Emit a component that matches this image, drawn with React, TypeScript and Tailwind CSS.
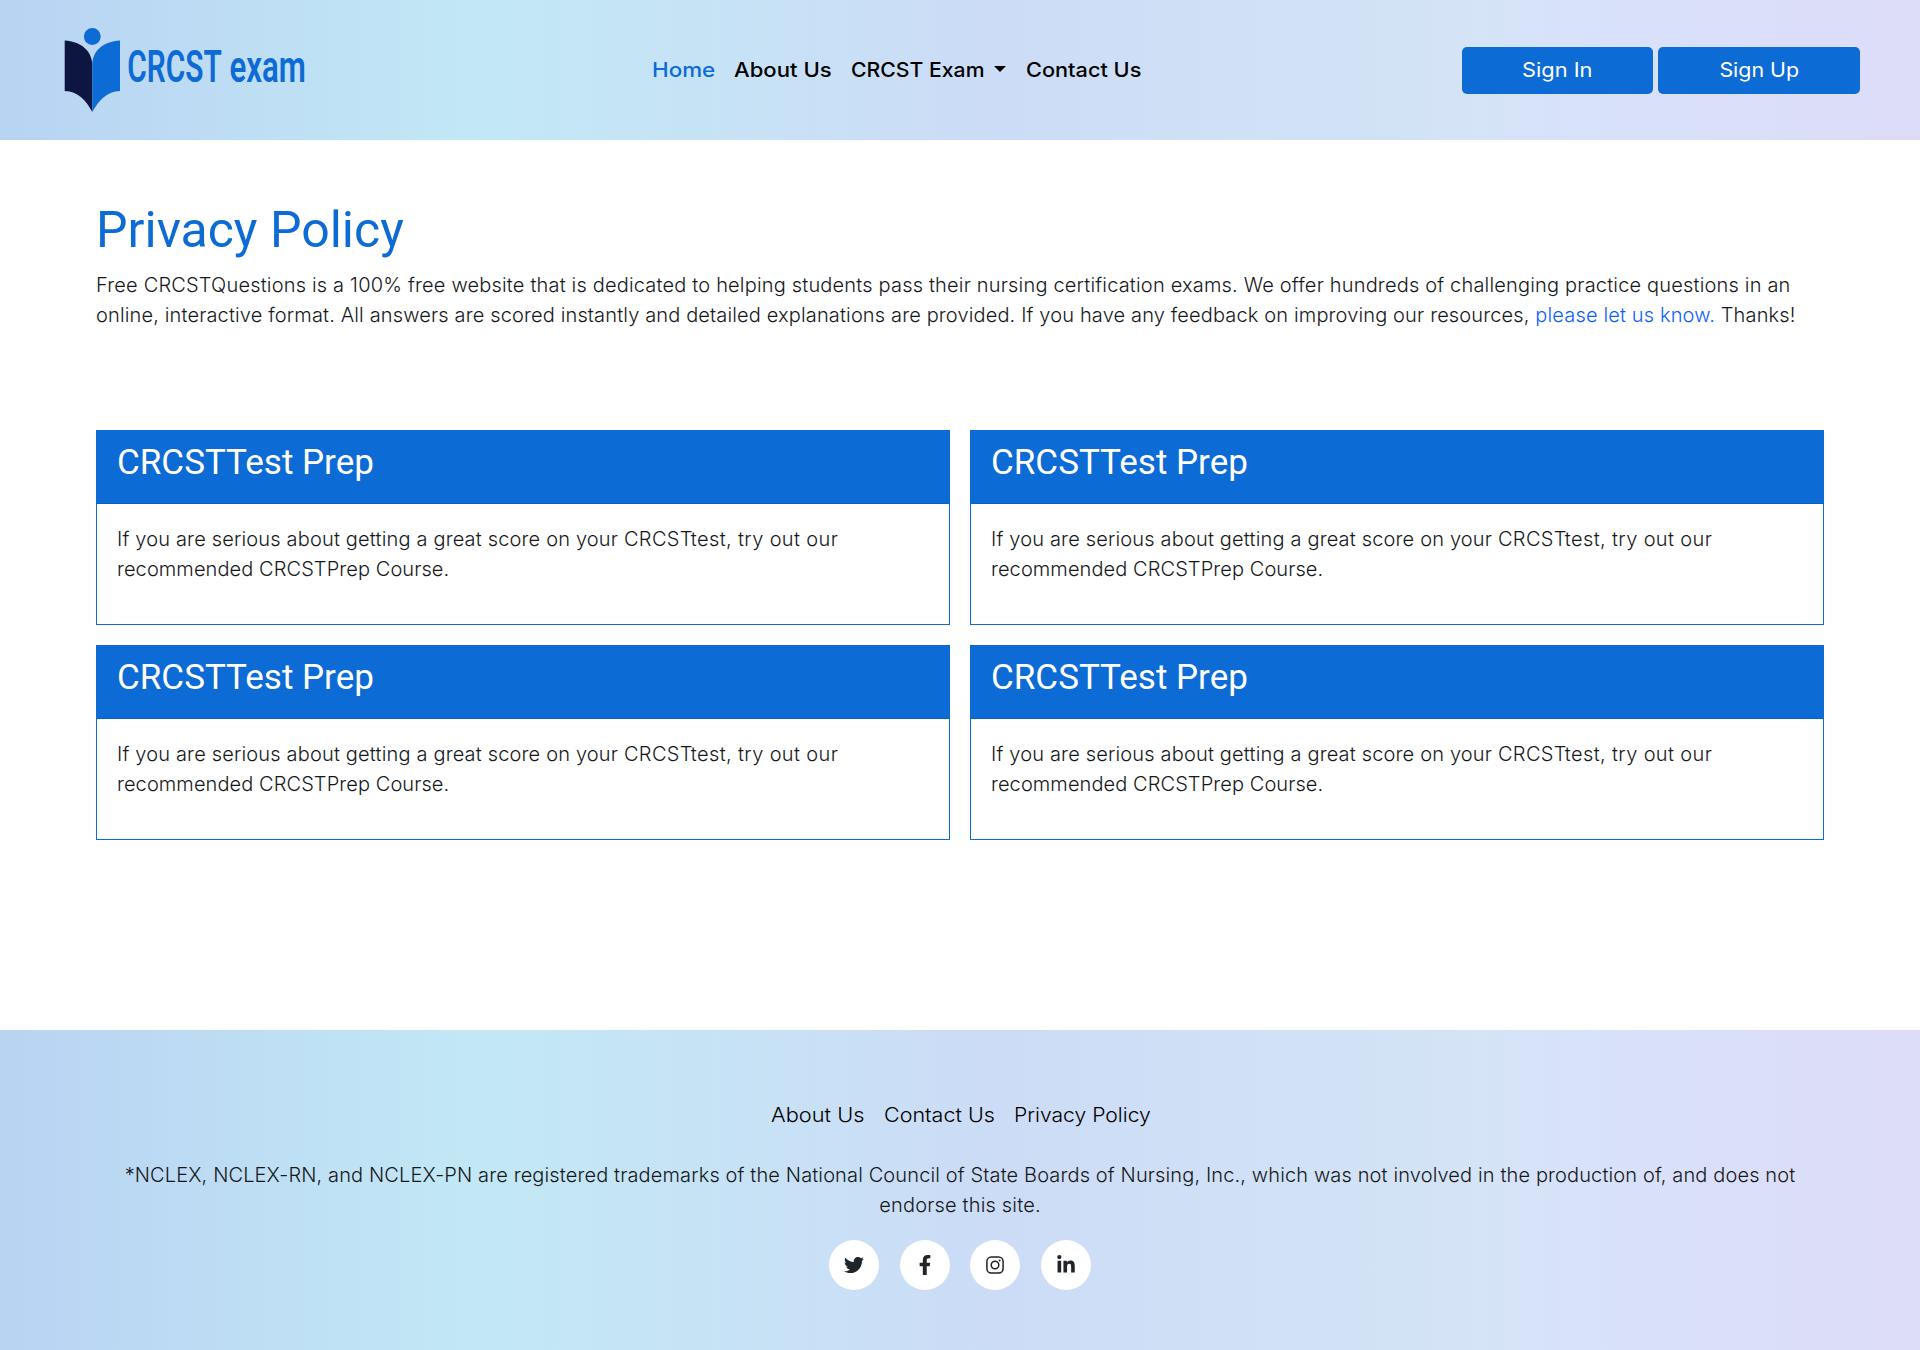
import { FaTwitter, FaFacebookF, FaLinkedinIn } from "react-icons/fa";

const cards = [1, 2, 3, 4];

const gradient =
  "bg-[linear-gradient(90deg,#b9d3f3_0%,#c2e8f5_25%,#ccdcf6_52%,#d4e4f6_76%,#d8e2fa_82%,#dddcf9_100%)]";

function Logo() {
  return (
    <svg width="260" height="86" viewBox="0 0 260 86" aria-label="CRCST exam">
      <circle cx="28.3" cy="8.5" r="8.4" fill="#0c6bd4" />
      <path d="M.7 12.500C17 13.500 28.300 23 28.300 37V84C22 72 14 63.500 .7 63Z" fill="#0d1641" />
      <path d="M56 12.500C39 13.500 28.300 23 28.300 37V84C35 72 43 63.500 56 63Z" fill="#0c6bd4" />
      <g transform="translate(0 54) scale(1 1.5)" fill="#0c6bd4" fontFamily="Roboto, sans-serif" fontWeight="600">
        <text x="63.300" y="0" fontSize="30" textLength="94.500" lengthAdjust="spacingAndGlyphs">CRCST</text>
        <text x="165.500" y="0" fontSize="29" textLength="76.500" lengthAdjust="spacingAndGlyphs">exam</text>
      </g>
    </svg>
  );
}

function InstagramIcon() {
  return (
    <svg width="18" height="18" viewBox="0 0 18 18" fill="none" stroke="currentColor" strokeWidth="1.5">
      <rect x="0.9" y="0.9" width="16.2" height="16.2" rx="4.4" />
      <circle cx="9" cy="9" r="3.8" />
      <circle cx="13.600" cy="4.400" r="1" fill="currentColor" stroke="none" />
    </svg>
  );
}

function Card() {
  return (
    <div className="h-[195px] border border-[#0c6bd4]">
      <div className="h-[73px] border-b border-[#0b60bf] bg-[#0c6bd4] px-5 pt-[9px]">
        <h2 className="whitespace-nowrap font-[Roboto] text-[35px] leading-[46px] font-normal text-white">CRCSTTest Prep</h2>
      </div>
      <p className="px-5 pt-5 leading-[30px] whitespace-nowrap">
        <span className="tracking-[0.17px]">If you are serious about getting a great score on your </span>
        <span className="tracking-[0.36px]">CRCSTtest, try out our</span>
        <br />
        <span className="tracking-[0.085px]">recommended CRCSTPrep Course.</span>
      </p>
    </div>
  );
}

export default function App() {
  return (
    <div className="flex h-[1350px] w-[1920px] flex-col bg-white font-[Inter] text-[20px] font-light text-[#16191c]">
      <header className={`${gradient} flex h-[140px] shrink-0 items-center pr-[60px] pl-[64px]`}>
        <div className="mt-px w-[588px]"><Logo /></div>
        <nav className="flex items-center whitespace-nowrap text-[20px] leading-[30px] font-[450] text-black">
          <a className="w-[82px] text-[#0c6bd4]"><span className="inline-block origin-left scale-x-[1.12]">Home</span></a>
          <a className="w-[117px]"><span className="inline-block origin-left scale-x-[1.105]">About Us</span></a>
          <a className="flex w-[175px] items-center">
            <span className="inline-block origin-left scale-x-[1.06]">CRCST Exam</span>
            <span className="mr-5 mb-[3px] ml-auto border-x-[6px] border-t-[6px] border-x-transparent border-t-black" />
          </a>
          <a><span className="inline-block origin-left scale-x-[1.085]">Contact Us</span></a>
        </nav>
        <div className="ml-auto flex gap-[5px] text-center font-normal text-white">
          <button className="h-[47px] w-[191px] rounded-[5px] bg-[#0c6bd4]"><span className="inline-block scale-x-[1.09]">Sign In</span></button>
          <button className="h-[47px] w-[202px] rounded-[5px] bg-[#0c6bd4]"><span className="inline-block scale-x-[1.07]">Sign Up</span></button>
        </div>
      </header>

      <main className="flex-1 px-24 pt-[60px]">
        <h1 className="font-[Roboto] text-[50px] leading-[60px] font-normal text-[#0c6bd4]">Privacy Policy</h1>
        <p className="mt-[10px] leading-[30px] whitespace-nowrap">
          <span className="tracking-[0.179px]">
            Free CRCSTQuestions is a 100% free website that is dedicated to helping students pass their nursing certification exams. We offer hundreds of challenging practice questions in an
          </span>
          <br />
          <span className="tracking-[0.143px]">
            online, interactive format. All answers are scored instantly and detailed explanations are provided. If you have any feedback on improving our resources,{" "}
            <a className="text-[#0d5ffd]">please let us know.</a> Thanks!
          </span>
        </p>
        <section className="mt-[100px] grid grid-cols-2 gap-5">
          {cards.map((c) => <Card key={c} />)}
        </section>
      </main>

      <footer className={`${gradient} flex h-[320px] shrink-0 flex-col items-center pt-[70px]`}>
        <nav className="flex leading-[30px] whitespace-nowrap text-black">
          <a className="w-[113px]"><span className="inline-block origin-left scale-x-[1.09]">About Us</span></a>
          <a className="w-[130px]"><span className="inline-block origin-left scale-x-[1.075]">Contact Us</span></a>
          <a className="w-[136px]"><span className="inline-block origin-left scale-x-[1.055]">Privacy Policy</span></a>
        </nav>
        <p className="mt-[30px] text-center leading-[30px] whitespace-nowrap">
          <span className="tracking-[0.128px]">
            *NCLEX, NCLEX-RN, and NCLEX-PN are registered trademarks of the National Council of State Boards of Nursing, Inc., which was not involved in the production of, and does not
          </span>
          <br />
          <span className="tracking-[0.18px]">endorse this site.</span>
        </p>
        <div className="mt-5 flex gap-[20.67px] text-[20px] text-[#212529]">
          {[FaTwitter, FaFacebookF, InstagramIcon, FaLinkedinIn].map((Icon, i) => (
            <span key={i} className="flex size-[50px] items-center justify-center rounded-full bg-white pb-px">
              <Icon />
            </span>
          ))}
        </div>
      </footer>
    </div>
  );
}
